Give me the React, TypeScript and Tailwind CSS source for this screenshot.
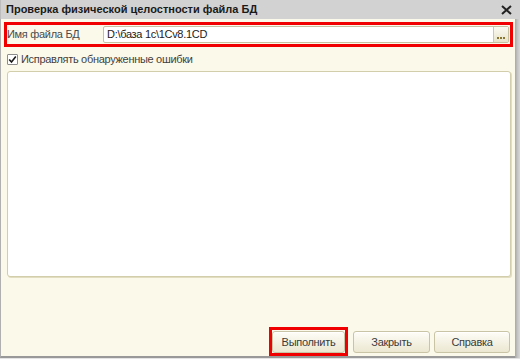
import React from "react";

const font = { fontFamily: '"Liberation Sans", Arial, sans-serif' };

function Btn({ children, w }: { children: React.ReactNode; w: string }) {
  return (
    <div
      className={`${w} h-[22px] flex items-center justify-center rounded-[3px] border border-[#c9c4a6] bg-gradient-to-b from-[#fefdf7] to-[#ebe7d1] text-[11px] tracking-[-0.3px] text-[#3a3a3a] shadow-[inset_0_1px_0_#ffffff]`}
    >
      {children}
    </div>
  );
}

export default function App() {
  return (
    <div className="w-[520px] h-[359px] bg-[#e4e4e4] flex flex-col overflow-hidden" style={font}>
      {/* Title bar */}
      <div className="h-[19px] bg-[#d2d2d2] border-l border-[#bdbdbd] flex items-center justify-between pl-[5px] pr-[8px]">
        <span className="text-[11px] font-bold text-[#1a1a1a] leading-none">
          Проверка физической целостности файла БД
        </span>
        <svg width="11" height="10" viewBox="0 0 11 10">
          <path d="M1 1 L10 9 M10 1 L1 9" stroke="#222" strokeWidth="2" />
        </svg>
      </div>
      {/* Body */}
      <div className="h-[339px] flex bg-[#b9b9b9]">
        <div className="flex-1 flex flex-col bg-[#fbf9ea] border-l border-[#b0b0b0] border-b-2 border-b-[#999999]">
          {/* File row (highlighted) */}
          <div className="mt-[3px] ml-[3px] mr-[2px] h-[25px] border-[3px] border-[#f00000] flex items-center">
            <span className="ml-[0px] w-[96px] text-[11px] tracking-[-0.3px] text-[#4a4a4a]">Имя файла БД</span>
            <div className="flex-1 mr-[1px] h-[17px] flex border border-[#c6c1a0] bg-white rounded-[2px]">
              <div className="flex-1 pl-[3px] text-[11px] tracking-[-0.3px] text-[#222] leading-[15px]">D:\база 1с\1Cv8.1CD</div>
              <div className="w-[15px] h-full border-l border-[#cdc8a8] bg-gradient-to-b from-[#fbfaf1] to-[#e7e3cb] flex items-end justify-center pb-[3px] gap-[1px]">
                <span className="w-[2px] h-[2px] bg-[#8a7630]" />
                <span className="w-[2px] h-[2px] bg-[#8a7630]" />
                <span className="w-[2px] h-[2px] bg-[#8a7630]" />
              </div>
            </div>
          </div>
          {/* Checkbox row */}
          <div className="mt-[6px] ml-[6px] flex items-center h-[12px]">
            <div className="w-[11px] h-[11px] border border-[#8c8c8c] bg-white rounded-[1px] flex items-center justify-center">
              <svg width="9" height="9" viewBox="0 0 9 9">
                <path d="M1.2 4.5 L3.5 7 L7.8 1.5" stroke="#1a1a1a" strokeWidth="1.6" fill="none" />
              </svg>
            </div>
            <span className="ml-[3px] text-[11px] tracking-[-0.3px] text-[#3f3f3f]">Исправлять обнаруженные ошибки</span>
          </div>
          {/* Text area */}
          <div className="mt-[6px] ml-[6px] mr-[4px] h-[206px] bg-white rounded-[3px] border border-[#d2cdaa] shadow-[1px_1px_0_#e2ddc0]" />
          <div className="flex-1" />
          {/* Buttons */}
          <div className="flex items-end justify-end pr-[5px]">
            <div className="border-[3px] border-[#f00000] pt-[1px]">
              <Btn w="w-[73px]">Выполнить</Btn>
            </div>
            <div className="ml-[5px] mb-[3px]">
              <Btn w="w-[77px]">Закрыть</Btn>
            </div>
            <div className="ml-[4px] mb-[3px]">
              <Btn w="w-[76px]">Справка</Btn>
            </div>
          </div>
        </div>
        <div className="w-[5px] bg-gradient-to-r from-[#a8a8a8] via-[#c4c4c4] to-[#d8d8d8]" />
      </div>
    </div>
  );
}
